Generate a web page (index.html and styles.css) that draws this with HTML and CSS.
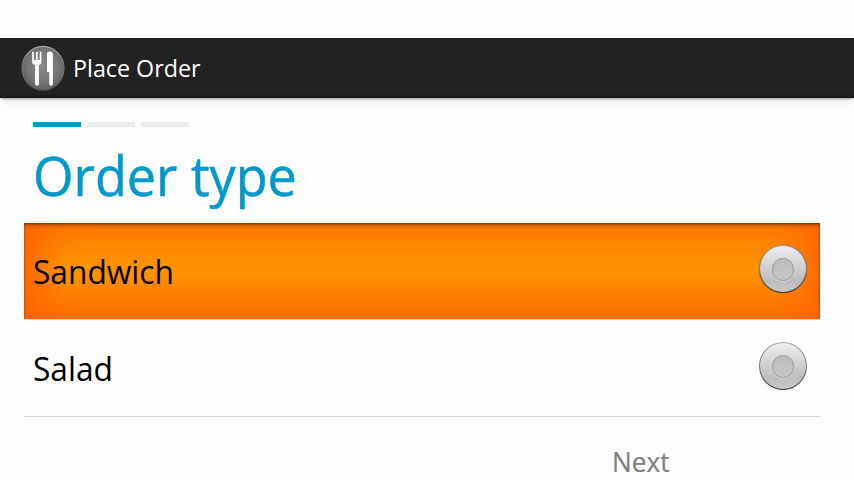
FILE: index.html
```html
<!DOCTYPE html>
<html lang="en">
<head>
<meta charset="utf-8">
<title>Place Order</title>
<link rel="stylesheet" href="styles.css">
</head>
<body>
<header class="action-bar">
  <svg class="logo" width="44" height="46" viewBox="0 0 44 46" aria-hidden="true">
    <defs>
      <radialGradient id="disc" cx=".5" cy=".45" r=".55">
        <stop offset="0" stop-color="#888886"/><stop offset=".65" stop-color="#777775"/><stop offset="1" stop-color="#626260"/>
      </radialGradient>
      <linearGradient id="rim" x2="0" y2="1">
        <stop offset="0" stop-color="#aaa"/><stop offset=".4" stop-color="#777"/><stop offset="1" stop-color="#555"/>
      </linearGradient>
    </defs>
    <ellipse cx="22" cy="23.3" rx="21" ry="21.9" fill="url(#disc)" stroke="url(#rim)" stroke-width="1.2"/>
    <g fill="#fff">
      <path d="M11.2 6.8V17q0 2.7 2.9 2.9V39q0 1.8 1.9 1.8t1.9-1.8V19.9q2.5-.2 2.5-2.9V6.8h-1.7V15h-2V6.8h-1.8V15h-2V6.8z"/>
      <path d="M26 8.8q0-2.3 3-2.3 2.9 0 2.9 3V39q0 1.8-1.8 1.8T28.3 39V27H26z"/>
    </g>
  </svg>
  <h1 class="app-title">Place Order</h1>
</header>
<main class="content">
  <div class="steps">
    <span class="step current"></span><span class="step"></span><span class="step"></span>
  </div>
  <h2 class="page-title">Order type</h2>
  <ul class="choices">
    <li class="choice pressed"><span class="label">Sandwich</span><span class="radio"></span></li>
    <li class="choice"><span class="label">Salad</span><span class="radio"></span></li>
  </ul>
</main>
<footer class="buttons"><button class="next" type="button">Next</button></footer>
</body>
</html>
```
FILE: styles.css
```css
* { box-sizing: border-box; }
body {
  margin: 0;
  padding-top: 38px;
  height: 480px;
  overflow: hidden;
  background: #fdfdfd;
  color: #000;
  font-family: "Open Sans", "Noto Sans", sans-serif;
}
.action-bar {
  display: flex;
  align-items: center;
  height: 60px;
  padding-left: 21px;
  background: linear-gradient(#1c1c1c 0, #222 2px, #222 56px, #141414 60px);
  box-shadow: 0 2px 2px -1px rgba(0,0,0,.35), 0 7px 7px -3px rgba(0,0,0,.09);
}
.logo { flex: none; }
.app-title {
  margin: 0 0 0 8px;
  color: #fff;
  font-size: 24px;
  font-weight: 400;
  line-height: 60px;
  transform: scaleX(.97);
  transform-origin: left;
}
.content { padding: 24px 34px 0 24px; }
.steps { display: flex; gap: 6px; padding-left: 9px; }
.step { width: 48px; height: 5px; background: #ebeded; }
.step.current { background: #0099cc; }
.page-title {
  margin: 18px 0 0 9px;
  color: #0099cc;
  font-size: 54px;
  font-weight: 400;
  line-height: 60px;
  transform: scaleX(.966);
  transform-origin: left;
  -webkit-text-stroke: .5px #0099cc;
}
.choices { margin: 18px 0 0; padding: 0; list-style: none; }
.choice {
  display: flex;
  align-items: center;
  justify-content: space-between;
  height: 97px;
  padding: 0 13px 0 9px;
  border-bottom: 1px solid #d6d6d6;
}
.choice.pressed {
  background:
    linear-gradient(rgba(80,30,0,.65), rgba(120,40,0,.2) 3px, transparent 6px),
    linear-gradient(90deg, rgba(120,50,0,.4), transparent 2px, transparent calc(100% - 2px), rgba(120,50,0,.4)),
    linear-gradient(90deg, #ff6500, rgba(255,101,0,.5) 18px, rgba(255,101,0,0) 44px, rgba(255,101,0,0) calc(100% - 44px), rgba(255,101,0,.5) calc(100% - 18px), #ff6500),
    linear-gradient(#ff7300, #ff9200 40%, #ff9200 52%, #ff6d00);
  background-clip: padding-box;
}
.label {
  padding-top: 2px;
  font-size: 32px;
  line-height: 48px;
  transform: scaleX(.99);
  transform-origin: left;
}
.radio {
  display: flex;
  align-items: center;
  justify-content: center;
  width: 48px;
  height: 48px;
  margin-bottom: 4px;
  border: 1px solid transparent;
  border-radius: 50%;
  background:
    linear-gradient(#eee, #bcbcbc 78%, #c8c8c8) padding-box,
    linear-gradient(#aaa, #777 50%, #333) border-box;
}
.pressed .radio { box-shadow: 0 0 1px rgba(60,30,0,.7); }
.radio::before {
  content: "";
  width: 20px;
  height: 21px;
  border: 1px solid #a3a3a3;
  border-radius: 50%;
  background: linear-gradient(#bdbdbd, #c6c6c6);
  box-shadow: 0 1px 0 rgba(255,255,255,.35);
}
.buttons { display: flex; padding: 21px 0 0 612px; }
.next {
  padding: 0;
  border: 0;
  background: none;
  color: #808080;
  font: 27px/48px "Open Sans", "Noto Sans", sans-serif;
  transform: scaleX(.97);
  transform-origin: left;
  -webkit-text-stroke: .2px #808080;
}
```
